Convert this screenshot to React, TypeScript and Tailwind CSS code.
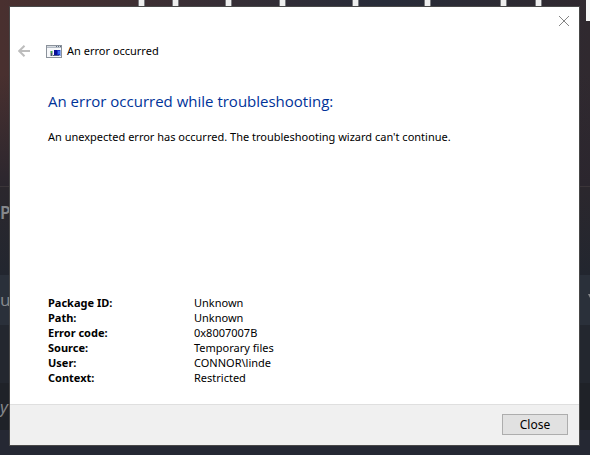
const details = [
  { label: 'Package ID:', value: 'Unknown' },
  { label: 'Path:', value: 'Unknown' },
  { label: 'Error code:', value: '0x8007007B' },
  { label: 'Source:', value: 'Temporary files' },
  { label: 'User:', value: 'CONNOR\\linde' },
  { label: 'Context:', value: 'Restricted' },
];

// Left edges of the light strips behind the top of the window
const strips = [138, 172, 225, 279, 352, 424, 500, 535];

function BackIcon() {
  return (
    <svg width="13" height="12" viewBox="0 0 13 12" fill="none" stroke="#bdbdbd" strokeWidth="2">
      <path d="M12 6H1M6.5 .7L1.2 6l5.3 5.3" />
    </svg>
  );
}

function CloseIcon() {
  return (
    <svg width="10" height="10" viewBox="0 0 10 10" fill="none" stroke="#858585" strokeWidth="1">
      <path d="M0 0l10 10M10 0L0 10" />
    </svg>
  );
}

function TroubleshooterIcon() {
  return (
    <svg width="16" height="13" viewBox="0 0 16 13" shapeRendering="crispEdges">
      <rect width="16" height="13" fill="#8b929b" />
      <rect x="1" y="3" width="14" height="9" fill="#f7f8fa" />
      <rect x="1" y="1" width="14" height="1" fill="#d5dae0" />
      <rect x="1" y="2" width="14" height="1" fill="#b4bbc4" />
      <rect x="10" y="1" width="1" height="1" fill="#5b6a80" />
      <rect x="12" y="1" width="1" height="1" fill="#5b6a80" />
      <rect x="14" y="1" width="1" height="1" fill="#5b6a80" />
      <rect x="4" y="6" width="3" height="5" fill="#a3abb3" />
      <rect x="5" y="6" width="1" height="2" fill="#35c435" />
      <rect x="5" y="8" width="1" height="3" fill="#4b5560" />
      <rect x="8" y="5" width="7" height="6" fill="#8ea9e4" />
      <rect x="8" y="5" width="6" height="5" fill="#1730c8" />
      <rect x="8" y="5" width="3" height="5" fill="#0a0f96" />
      <rect x="12" y="6" width="2" height="3" fill="#3c68ef" />
      <rect x="7" y="10" width="6" height="1" fill="#4c5a86" />
    </svg>
  );
}

function Backdrop() {
  return (
    <div className="relative col-start-1 row-start-1 flex flex-col overflow-hidden bg-[#252833] text-[17px] text-[#85878b]">
      <div className="h-[186px] bg-linear-to-r from-[#49302f] via-[#282c39] via-65% to-[#30292f]">
        <div className="h-full bg-linear-to-b from-transparent via-transparent via-40% to-[#2b262e]" />
      </div>
      <div className="h-[89px] border-t border-[#3b3539] bg-linear-to-b from-[#2b272d] to-[#22262f] pt-4">
        <span className="block font-semibold leading-5">P</span>
      </div>
      <div className="flex h-[50px] items-center justify-between bg-[#2a303a]">
        <span>u</span>
        <svg width="2" height="4" viewBox="0 0 2 4" className="mb-2">
          <path d="M0 0h2v4z" fill="#85878b" />
        </svg>
      </div>
      <div className="h-[58px] bg-[#23272f]" />
      <div className="h-[47px] bg-[#1f2228] pt-3 leading-6 italic">y</div>
      <svg className="absolute inset-x-0 top-0" width="590" height="22" viewBox="0 0 590 22" shapeRendering="crispEdges">
        {strips.map((x) => (
          <g key={x}>
            <rect x={x} y="0" width="7" height="7" fill="#77787c" />
            <rect x={x + 1} y="0" width="5" height="7" fill="#eeeeee" />
          </g>
        ))}
        <rect x="586" y="0" width="4" height="21" fill="#f4f4f4" />
      </svg>
    </div>
  );
}

export default function App() {
  return (
    <div className="grid min-h-screen font-['Noto_Sans','Open_Sans',sans-serif] text-[11px] text-black">
      <Backdrop />
      <div className="relative col-start-1 row-start-1 flex pt-1.5 pr-[10px] pb-[9px] pl-[9px]">
        <div role="dialog" aria-labelledby="dialog-title" className="flex flex-1 flex-col border border-[#484848] bg-white">
          <div className="flex justify-end px-[10px] pt-[9px]">
            <button aria-label="Close window" className="flex">
              <CloseIcon />
            </button>
          </div>

          <header className="mt-[15px] flex h-5 items-center pl-2">
            <button aria-label="Back" disabled className="flex">
              <BackIcon />
            </button>
            <span className="mr-[5px] ml-[15px] flex">
              <TroubleshooterIcon />
            </span>
            <h1 id="dialog-title">An error occurred</h1>
          </header>

          <main className="flex flex-1 flex-col px-[38px] pb-[19px]">
            <h2 className="mt-7 font-['Open_Sans','Noto_Sans',sans-serif] text-[15px] leading-6 text-[#003399]">
              An error occurred while troubleshooting:
            </h2>
            <p className="mt-4 leading-4">An unexpected error has occurred. The troubleshooting wizard can't continue.</p>

            <dl className="mt-auto">
              {details.map((item) => (
                <div key={item.label} className="flex leading-[15px]">
                  <dt className="w-[146px] font-bold">{item.label}</dt>
                  <dd>{item.value}</dd>
                </div>
              ))}
            </dl>
          </main>

          <footer className="flex justify-end border-t border-[#dfdfdf] bg-[#f0f0f0] px-[11px] pt-[9px] pb-[10px]">
            <button className="h-[21px] w-[66px] border border-[#adadad] bg-[#e1e1e1] text-xs leading-none">Close</button>
          </footer>
        </div>
      </div>
    </div>
  );
}
